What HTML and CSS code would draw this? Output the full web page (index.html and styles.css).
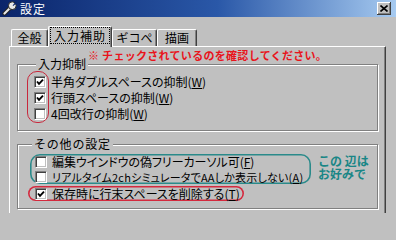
FILE: index.html
```html
<!DOCTYPE html>
<html lang="ja">
<head>
<meta charset="utf-8">
<title>設定</title>
<link rel="stylesheet" href="styles.css">
</head>
<body>
<div class="window">
  <div class="titlebar">
    <svg class="ticon" viewBox="0 0 15 15" width="15" height="15">
      <path d="M2.5 12.5 L8 7" stroke="#222" stroke-width="4.2" stroke-linecap="round"/>
      <path d="M2.5 12.5 L8 7" stroke="#e8e8e8" stroke-width="2.2" stroke-linecap="round"/>
      <circle cx="10.3" cy="4.7" r="3.9" fill="#e8e8e8" stroke="#222" stroke-width="1"/>
      <path d="M10.6 4.4 L13.6 0.6 L15 2 L11.2 5 Z" fill="#0a246a"/>
    </svg>
    <span class="ttext">設定</span>
    <span class="close">
      <svg viewBox="0 0 8 7" width="8" height="7"><path d="M0.5 0.5 L7.5 6.5 M7.5 0.5 L0.5 6.5" stroke="#000" stroke-width="1.6"/></svg>
    </span>
  </div>

  <div class="tabs">
    <div class="tab t1">全般</div>
    <div class="tab t2 active"><span class="focus">入力補助</span></div>
    <div class="tab t3">ギコペ</div>
    <div class="tab t4">描画</div>
  </div>

  <div class="panel">
    <p class="note">※ チェックされているのを確認してください。</p>

    <fieldset class="group g1">
      <legend>入力抑制</legend>
      <div class="g1-rows">
        <span class="ring ring-cb"></span>
        <div class="row"><span class="cb"><svg viewBox="0 0 8 8" width="8" height="8"><path d="M1 3.5 L3 5.8 L7 1.6" stroke="#000" stroke-width="1.9" fill="none"/></svg></span><span class="lbl">半角ダブルスペースの抑制(<u>W</u>)</span></div>
        <div class="row"><span class="cb"><svg viewBox="0 0 8 8" width="8" height="8"><path d="M1 3.5 L3 5.8 L7 1.6" stroke="#000" stroke-width="1.9" fill="none"/></svg></span><span class="lbl">行頭スペースの抑制(<u>W</u>)</span></div>
        <div class="row"><span class="cb"></span><span class="lbl">4回改行の抑制(<u>W</u>)</span></div>
      </div>
    </fieldset>

    <fieldset class="group g2">
      <legend>その他の設定</legend>
      <div class="g2-body">
        <div class="g2-rows">
          <div class="ringbox teal">
            <div class="row r15"><span class="cb"></span><span class="lbl">編集ウインドウの偽フリーカーソル可(<u>F</u>)</span></div>
            <div class="row r15"><span class="cb"></span><span class="lbl tight">リアルタイム2chシミュレータでAAしか表示しない(<u>A</u>)</span></div>
          </div>
          <div class="ringbox red">
            <div class="row r15"><span class="cb"><svg viewBox="0 0 8 8" width="8" height="8"><path d="M1 3.5 L3 5.8 L7 1.6" stroke="#000" stroke-width="1.9" fill="none"/></svg></span><span class="lbl">保存時に行末スペースを削除する(<u>T</u>)</span></div>
          </div>
        </div>
        <div class="aside">この 辺は<br>お好みで</div>
      </div>
    </fieldset>
  </div>
</div>
</body>
</html>
```

FILE: styles.css
```css
* { box-sizing: border-box; }
html, body { margin: 0; padding: 0; }
body {
  width: 396px;
  height: 213px;
  overflow: hidden;
  background: #c0c0c0;
  font-family: "Noto Sans CJK JP", "Noto Sans", sans-serif;
  font-size: 12px;
  color: #000;
}

.titlebar {
  height: 17px;
  display: flex;
  align-items: center;
  padding: 0 5px 0 2px;
  background: linear-gradient(to right, #0a246a 0%, #2a58a8 55%, #a6caf0 100%);
}
.ticon { flex: none; }
.ttext {
  color: #fff;
  font-size: 12px;
  line-height: 12px;
  margin-left: 3px;
  letter-spacing: 1px;
}
.close {
  margin-left: auto;
  width: 14px;
  height: 13px;
  background: #c0c0c0;
  box-shadow: inset -1px -1px #404040, inset 1px 1px #fff, inset -2px -2px #808080;
  display: flex;
  align-items: center;
  justify-content: center;
}

.tabs {
  display: flex;
  align-items: flex-end;
  height: 20px;
  margin-top: 9px;
  padding-left: 11px;
}
.tab {
  height: 17px;
  border-top: 1px solid #fff;
  border-left: 1px solid #fff;
  border-right: 1px solid #404040;
  box-shadow: inset -1px 0 #808080;
  border-radius: 2px 2px 0 0;
  text-align: center;
  font-size: 12px;
  line-height: 16px;
}
.t1 { width: 37px; }
.t2 { width: 64px; }
.t3 { width: 45px; }
.t4 { width: 40px; }
.tab.active {
  height: 21px;
  margin-bottom: -1px;
  position: relative;
  z-index: 1;
  background: #c0c0c0;
}
.focus {
  display: block;
  margin: 0 1px;
  height: 17px;
  line-height: 17px;
  outline: 1px dotted #000;
  outline-offset: -1px;
  letter-spacing: 1px;
}

.panel {
  margin-left: 9px;
  width: 377px;
  height: 170px;
  border-top: 1px solid #fff;
  border-left: 1px solid #fff;
  border-right: 1px solid #404040;
  box-shadow: inset -1px 0 #808080;
  padding-top: 3px;
}
.note {
  margin: 0 0 0 78px;
  height: 11px;
  font-size: 11px;
  line-height: 11px;
  font-weight: bold;
  letter-spacing: 0.3px;
  color: #e8141c;
  white-space: nowrap;
}

.group {
  margin: 0 0 0 7px;
  width: 361px;
  min-width: 0;
  padding: 0;
  border: 1px solid #808080;
  box-shadow: inset 1px 1px #fff, 1px 1px #fff;
}
.group legend {
  margin-left: 2px;
  padding: 0 2px;
  font-size: 12px;
  line-height: 12px;
  background: #c0c0c0;
}
.g2 legend { letter-spacing: 0.8px; }
.g1 { margin-top: -3px; padding: 4px 0 8px 16px; }
.g2 { margin-top: 7px; padding: 4px 0 7px 12px; }

.g1-rows { position: relative; }
.row {
  display: flex;
  align-items: center;
  height: 16px;
  white-space: nowrap;
}
.row.r15 { height: 15px; }
.cb {
  flex: none;
  width: 12px;
  height: 12px;
  margin-right: 5px;
  background: #fff;
  border-top: 1px solid #808080;
  border-left: 1px solid #808080;
  border-right: 1px solid #fff;
  border-bottom: 1px solid #fff;
  box-shadow: inset 1px 1px #404040, inset -1px -1px #c0c0c0;
  display: flex;
  align-items: center;
  justify-content: center;
}
.lbl {
  font-size: 12px;
  line-height: 12px;
  font-feature-settings: "palt";
}
.lbl.tight {
  font-size: 11px;
  letter-spacing: 0.2px;
}
.lbl u { text-underline-offset: 1px; }

.ring-cb {
  position: absolute;
  left: -7px;
  top: -3px;
  width: 22px;
  height: 52px;
  border: 1.5px solid #c8283c;
  border-radius: 10px;
}

.g2-body { display: flex; align-items: flex-start; }
.g2-rows { display: flex; flex-direction: column; }
.ringbox.teal {
  width: 281px;
  padding-left: 5px;
  border-radius: 10px;
  box-shadow: inset 0 0 0 1.6px #2a8a8a;
}
.ringbox.red {
  width: 216px;
  margin-top: 2px;
  margin-left: -2px;
  padding-left: 7px;
  border-radius: 8px;
  box-shadow: inset 0 0 0 1.6px #d42a3e;
}
.aside {
  margin: 0 0 0 7px;
  color: #198686;
  font-weight: bold;
  font-size: 12px;
  line-height: 13px;
  white-space: nowrap;
}
```
